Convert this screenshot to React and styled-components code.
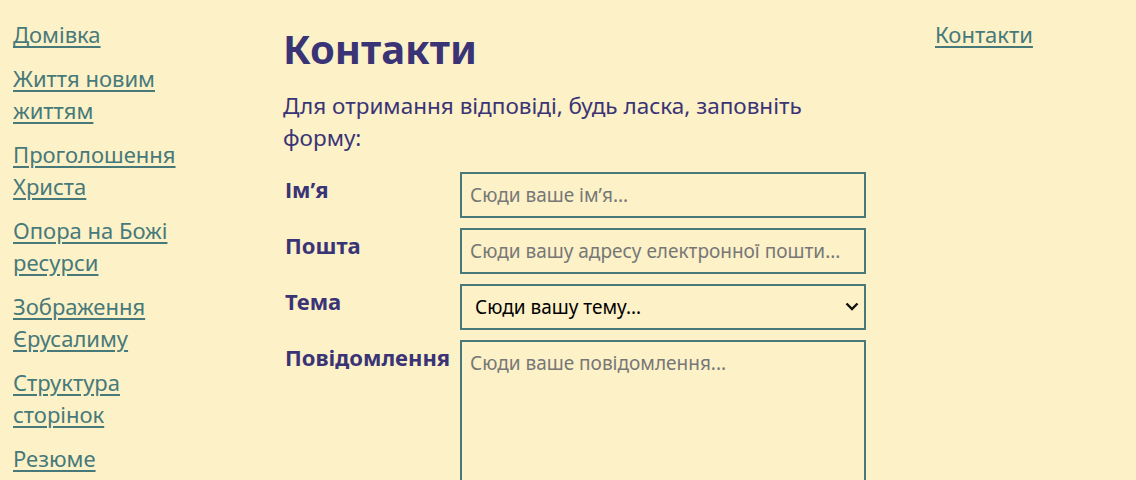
import styled, { createGlobalStyle } from "styled-components";

const GlobalStyle = createGlobalStyle`
  html, body {
    margin: 0;
    padding: 0;
    background: #fcf1c7;
  }
  body {
    font-family: "Noto Sans", "Open Sans", sans-serif;
  }
`;

const navItems = [
  "Домівка",
  "Життя новим життям",
  "Проголошення Христа",
  "Опора на Божі ресурси",
  "Зображення Єрусалиму",
  "Структура сторінок",
  "Резюме",
];

const App = () => {
  return (
    <>
      <GlobalStyle />
      <Page>
        <Nav>
          {navItems.map((item) => (
            <NavLink key={item} href="#">
              {item}
            </NavLink>
          ))}
        </Nav>
        <Main>
          <Title>Контакти</Title>
          <Intro>Для отримання відповіді, будь ласка, заповніть форму:</Intro>
          <Form>
            <Label htmlFor="name">Ім’я</Label>
            <Input id="name" placeholder="Сюди ваше ім’я..." />
            <Label htmlFor="mail">Пошта</Label>
            <Input id="mail" placeholder="Сюди вашу адресу електронної пошти..." />
            <Label htmlFor="topic">Тема</Label>
            <SelectWrap>
              <Select id="topic" defaultValue="">
                <option value="">Сюди вашу тему...</option>
              </Select>
              <Chevron width="14" height="9" viewBox="0 0 14 9">
                <polyline
                  points="1.5,1.5 7,7 12.5,1.5"
                  fill="none"
                  stroke="#111"
                  strokeWidth="2.4"
                />
              </Chevron>
            </SelectWrap>
            <Label htmlFor="msg">Повідомлення</Label>
            <TextArea id="msg" placeholder="Сюди ваше повідомлення..." />
          </Form>
        </Main>
        <Aside>
          <NavLink href="#">Контакти</NavLink>
        </Aside>
      </Page>
    </>
  );
};

export default App;

const Page = styled.div`
  display: grid;
  grid-template-columns: 270px 583px 1fr;
  padding: 18px 0 0 13px;
`;

const Nav = styled.nav`
  display: flex;
  flex-direction: column;
  gap: 12px;
  width: 200px;
`;

const NavLink = styled.a`
  font-size: 22px;
  line-height: 32px;
  color: #47797a;
  text-decoration: underline;
  text-underline-offset: 3px;
  align-self: flex-start;
`;

const Main = styled.main`
  display: flex;
  flex-direction: column;
`;

const Title = styled.h1`
  margin: 2px 0 0;
  font-size: 40px;
  line-height: 58px;
  font-weight: 700;
  color: #3a3476;
`;

const Intro = styled.p`
  margin: 12px 0 18px;
  font-size: 22.5px;
  line-height: 32px;
  color: #3a3476;
`;

const Form = styled.form`
  display: grid;
  grid-template-columns: 177px 406px;
  row-gap: 10px;
`;

const Label = styled.label`
  font-size: 22px;
  font-weight: 700;
  color: #3a3476;
  padding: 2px 0 0 2px;
  white-space: nowrap;
`;

const fieldBase = `
  box-sizing: border-box;
  width: 406px;
  border: 2px solid #47797a;
  border-radius: 0;
  background: #fcf1c7;
  font-family: "Noto Sans", "Open Sans", sans-serif;
  font-size: 19px;
  padding: 0 8px;
  outline: none;
  &::placeholder {
    color: #777;
  }
`;

const Input = styled.input`
  ${fieldBase}
  height: 46px;
`;

const SelectWrap = styled.div`
  position: relative;
  width: 406px;
  height: 46px;
`;

const Select = styled.select`
  ${fieldBase}
  height: 46px;
  color: #000;
  padding-left: 13px;
  appearance: none;
`;

const Chevron = styled.svg`
  position: absolute;
  right: 7px;
  top: 18px;
  pointer-events: none;
`;

const TextArea = styled.textarea`
  ${fieldBase}
  height: 200px;
  padding-top: 8px;
  resize: none;
`;

const Aside = styled.aside`
  display: flex;
  flex-direction: column;
  padding-left: 69px;
`;
